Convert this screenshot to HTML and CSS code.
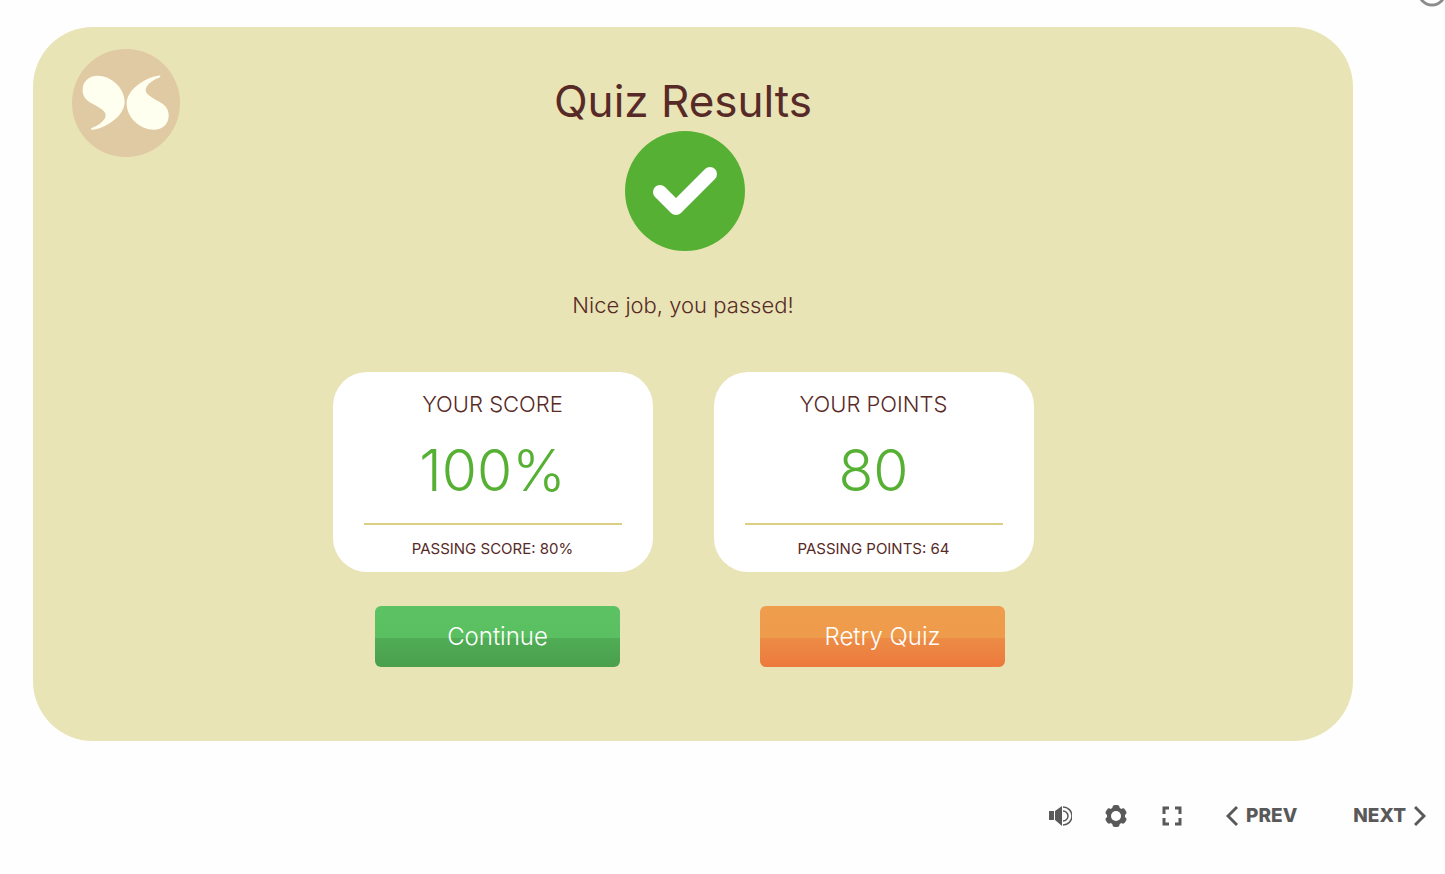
FILE: index.html
```html
<!DOCTYPE html>
<html lang="en">
	<head>
		<meta charset="UTF-8">
		<meta name="viewport" content="width=device-width, initial-scale=1">
		<title>Quiz Results</title>
		<link rel="stylesheet" href="styles.css">
	</head>
	<body>
		<header class="topbar">
			<svg class="ring" viewBox="0 0 30 8" aria-hidden="true"><circle cx="15" cy="-8" r="13" fill="none" stroke="#8c8c8c" stroke-width="3"/></svg>
		</header>
		<main class="slide">
			<svg class="logo" viewBox="0 0 324 324" aria-hidden="true">
				<circle cx="162" cy="162" r="162" fill="#e0caa4"/>
				<g fill="#fffff0">
					<path id="drop" d="M77 80C51 80 32 97 32 122C32 143 42 153 59 163C81 176 101 185 101 199C101 212 84 228 61 236C54 239 56 243 62 242C88 241 158 207 158 158C158 116 116 80 77 80Z"/>
					<use href="#drop" transform="rotate(180 161 161)"/>
				</g>
			</svg>
			<section class="results">
				<h1>Quiz Results</h1>
				<svg class="passed" viewBox="0 0 120 120" aria-hidden="true">
					<circle cx="60" cy="60" r="60" fill="#56b033"/>
					<path d="M35 61L51 77L85 43" fill="none" stroke="#fff" stroke-width="14" stroke-linecap="round" stroke-linejoin="round"/>
				</svg>
				<p class="message">Nice job, you passed!</p>
				<div class="cards">
					<div class="card">
						<h2>YOUR SCORE</h2>
						<p class="value">100%</p>
						<p class="passing">PASSING SCORE: 80%</p>
					</div>
					<div class="card">
						<h2>YOUR POINTS</h2>
						<p class="value">80</p>
						<p class="passing">PASSING POINTS: 64</p>
					</div>
				</div>
				<div class="actions">
					<button class="btn continue">Continue</button>
					<button class="btn retry">Retry Quiz</button>
				</div>
			</section>
		</main>
		<footer class="controls">
			<button class="icon" aria-label="Volume">
				<svg viewBox="0 0 24 24">
					<path d="M1 7h5v9H1zM7 7l7-5v20l-7-6z" fill="#595959"/>
					<path d="M15 7a5 5 0 0 1 0 10M15 3a9 9 0 0 1 0 18" fill="none" stroke="#595959" stroke-width="1.500"/>
				</svg>
			</button>
			<button class="icon" aria-label="Settings">
				<svg viewBox="0 0 24 24">
					<g fill="#595959">
						<rect id="tooth" x="8.500" y="1" width="7" height="22" rx="2.500"/>
						<use href="#tooth" transform="rotate(60 12 12)"/>
						<use href="#tooth" transform="rotate(120 12 12)"/>
						<circle cx="12" cy="12" r="9"/>
					</g>
					<circle cx="12" cy="12" r="5" fill="#fff"/>
				</svg>
			</button>
			<button class="icon" aria-label="Full screen">
				<svg viewBox="0 0 24 24"><path d="M4 10V4h5M15 4h5v6M20 14v6h-5M9 20H4v-6" fill="none" stroke="#595959" stroke-width="3"/></svg>
			</button>
			<button class="nav prev">
				<svg viewBox="0 0 12 22"><path d="M11 2L2 11l9 9" fill="none" stroke="#595959" stroke-width="3"/></svg>
				PREV
			</button>
			<button class="nav next">
				NEXT
				<svg viewBox="0 0 12 22"><path d="M1 2l9 9-9 9" fill="none" stroke="#595959" stroke-width="3"/></svg>
			</button>
		</footer>
	</body>
</html>
```
FILE: styles.css
```css
* {
	box-sizing: border-box;
}
body {
	margin: 0;
	overflow-x: hidden;
	background: #fefefe;
	color: #582a27;
	font-family: Inter, "Liberation Sans", sans-serif;
}
h1, h2, p {
	margin: 0;
	font-weight: 400;
}
svg {
	display: block;
}
button {
	border: 0;
	padding: 0;
	background: none;
	font-family: inherit;
	cursor: pointer;
}

.topbar {
	display: flex;
	justify-content: flex-end;
	height: 27px;
}
.ring {
	width: 30px;
	height: 8px;
	margin-right: -2px;
	overflow: hidden;
}

.slide {
	display: grid;
	grid-template-columns: 108px 1fr 108px;
	margin: 0 92px 0 33px;
	padding: 22px 59px 74px 39px;
	border-radius: 60px;
	background: #e8e4b5;
}
.logo {
	width: 108px;
	height: 108px;
}
.results {
	display: flex;
	flex-direction: column;
	align-items: center;
	padding-top: 22px;
}
h1 {
	font-size: 44px;
	line-height: 60px;
}
.passed {
	width: 120px;
	height: 120px;
	margin-left: 4px;
}
.message {
	margin-top: 38px;
	font-size: 22px;
	font-weight: 300;
	line-height: 32px;
}

.cards {
	display: flex;
	gap: 61px;
	margin-top: 51px;
}
.card {
	width: 320px;
	padding: 17px 31px 12px;
	border-radius: 34px;
	background: #fff;
	text-align: center;
}
h2 {
	font-size: 22px;
	font-weight: 300;
	line-height: 30px;
}
.value {
	padding: 16px 0;
	border-bottom: 2px solid #dacf82;
	color: #56b033;
	font-size: 57px;
	font-weight: 300;
	line-height: 72px;
}
.passing {
	padding-top: 13px;
	font-size: 15px;
	line-height: 22px;
}

.actions {
	display: flex;
	gap: 140px;
	margin-top: 34px;
	padding-left: 14px;
}
.btn {
	width: 245px;
	height: 61px;
	border-radius: 6px;
	color: #fff;
	font-size: 24px;
	font-weight: 300;
}
.continue {
	background: linear-gradient(#5cc263, #5abf60 52%, #50ad56 52%, #4a9f4c);
}
.retry {
	background: linear-gradient(#ef9e4d, #ee9b4b 52%, #ed8c46 52%, #ec793d);
}

.controls {
	display: flex;
	justify-content: flex-end;
	align-items: center;
	margin-top: 60px;
	padding-right: 19px;
}
.icon {
	margin-right: 32px;
}
.icon svg {
	width: 24px;
	height: 24px;
}
.nav {
	display: flex;
	align-items: center;
	gap: 8px;
	color: #595959;
	font-size: 19px;
	font-weight: 800;
	line-height: 30px;
}
.nav svg {
	width: 12px;
	height: 22px;
}
.prev {
	margin-left: 10px;
}
.next {
	margin-left: 56px;
}
```
